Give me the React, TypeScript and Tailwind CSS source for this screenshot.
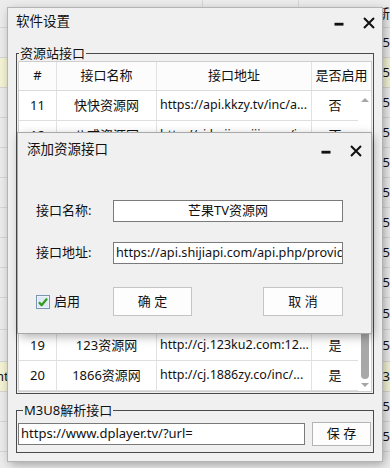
import React from 'react';

const FONT = { fontFamily: '"Noto Sans", "Noto Sans CJK SC", sans-serif' };

interface Row {
  id: number;
  name: string;
  url: string;
  on: string;
}

const rows: Row[] = [
  { id: 11, name: '快快资源网', url: 'https://api.kkzy.tv/inc/a...', on: '否' },
  { id: 12, name: '八戒资源网', url: 'http://cj.bajiecaiji.com/i...', on: '否' },
  { id: 13, name: '酷云资源网', url: 'http://caiji.kuyun98.co...', on: '是' },
  { id: 14, name: '最大资源网', url: 'http://www.zdziyuan.co...', on: '是' },
  { id: 15, name: '永久资源网', url: 'http://cj.yongjiuzyw.co...', on: '是' },
  { id: 16, name: '135资源网', url: 'http://cj.zycjw1.com/inc...', on: '是' },
  { id: 17, name: '麻花资源网', url: 'https://www.mhapi123.c...', on: '是' },
  { id: 18, name: '88资源网', url: 'http://www.88zyw.net/in...', on: '是' },
  { id: 19, name: '123资源网', url: 'http://cj.123ku2.com:12...', on: '是' },
  { id: 20, name: '1866资源网', url: 'http://cj.1886zy.co/inc/...', on: '是' },
];

// rows of the app behind the settings window
const bgRows = [
  { left: '', right: '更新', yellow: false, h: 'h-[28px]' },
  { left: '', right: '05', yellow: false, h: 'h-[30px]' },
  { left: '', right: '05', yellow: true, h: 'h-[30px]' },
  { left: '', right: '05', yellow: false, h: 'h-[30px]' },
  { left: '', right: '05', yellow: false, h: 'h-[30px]' },
  { left: '', right: '05', yellow: false, h: 'h-[30px]' },
  { left: '', right: '05', yellow: false, h: 'h-[30px]' },
  { left: '', right: '05', yellow: false, h: 'h-[30px]' },
  { left: '', right: '05', yellow: false, h: 'h-[30px]' },
  { left: '', right: '05', yellow: false, h: 'h-[30px]' },
  { left: '', right: '05', yellow: false, h: 'h-[32px]' },
  { left: '', right: '05', yellow: false, h: 'h-[32px]' },
  { left: 'nt', right: 'B3', yellow: true, h: 'h-[30px]' },
  { left: '', right: '05', yellow: false, h: 'h-[30px]' },
  { left: '', right: '05', yellow: false, h: 'h-[30px]' },
];

const MinIcon = () => (
  <svg width="12" height="12" viewBox="0 0 12 12">
    <rect x="1.5" y="5.8" width="9" height="2.8" fill="#111" />
  </svg>
);

const CloseIcon = () => (
  <svg width="14" height="14" viewBox="0 0 14 14">
    <path d="M2 2 L12 12 M12 2 L2 12" stroke="#111" strokeWidth="2" />
  </svg>
);

const Check = () => (
  <svg width="14" height="14" viewBox="0 0 14 14">
    <rect x="0.5" y="0.5" width="13" height="13" fill="#eef4fb" stroke="#7a94b4" />
    <rect x="2" y="2" width="10" height="10" fill="#dfe9f5" />
    <path d="M3 7.2 L5.6 10.2 L11 3.6" stroke="#2f9a1e" strokeWidth="2.2" fill="none" strokeLinejoin="round" />
  </svg>
);

const App: React.FC = () => {
  return (
    <div className="relative w-[390px] h-[468px] overflow-hidden bg-[#ececec] text-[#111]" style={FONT}>
      {/* background app grid */}
      <div className="flex flex-col">
        {bgRows.map((r, i) => (
          <div
            key={i}
            className={`${r.h} flex items-center border-b border-[#d6d6d6] text-[13px] ${r.yellow ? 'bg-[#f4f3d4]' : ''}`}
          >
            <div className="w-[215px] h-full flex items-center border-r border-[#d6d6d6] -ml-[4px]">{r.left}</div>
            <div className="w-[100px] h-full border-r border-[#d6d6d6]" />
            <div className="w-[68px] h-full" />
            <div className="whitespace-nowrap">{r.right}</div>
          </div>
        ))}
      </div>

      {/* main window */}
      <div className="absolute left-[8px] top-[8px] w-[374px] flex flex-col bg-[#f0f0f0] shadow-[0_0_0_1px_#b4b4b4,2px_3px_10px_rgba(0,0,0,0.35)]">
        <div className="h-[28px] flex items-center pl-[8px] pr-[6px]">
          <span className="text-[13.5px] leading-none">软件设置</span>
          <div className="ml-auto flex items-center gap-[17px] mt-[2px]">
            <MinIcon />
            <CloseIcon />
          </div>
        </div>

        <fieldset className="mx-[8px] mt-[9px] border border-[#4a4a4a] px-[1px] pb-[1px]">
          <legend className="ml-[1px] px-[1px] text-[13px] leading-[16px]">资源站接口</legend>
          <div className="border border-[#cfcfcf] bg-white h-[331px] overflow-hidden flex flex-col text-[13px]">
            <div className="h-[29px] shrink-0 grid grid-cols-[38px_100px_155px_59px] border-b border-[#dadada] bg-[#fcfcfc]">
              <div className="flex items-center justify-center border-r border-[#e2e2e2]">#</div>
              <div className="flex items-center justify-center border-r border-[#e2e2e2]">接口名称</div>
              <div className="flex items-center justify-center border-r border-[#e2e2e2]">接口地址</div>
              <div className="flex items-center justify-center whitespace-nowrap">是否启用</div>
            </div>
            <div className="flex flex-1 min-h-0">
              <div className="flex flex-col w-[339px]">
                {rows.map((r) => (
                  <div key={r.id} className="h-[30px] shrink-0 grid grid-cols-[38px_100px_155px_46px] border-b border-[#dedede]">
                    <div className="flex items-center justify-center border-r border-[#e2e2e2]">{r.id}</div>
                    <div className="flex items-center justify-center border-r border-[#e2e2e2] whitespace-nowrap">{r.name}</div>
                    <div className="flex items-center pl-[3px] border-r border-[#e2e2e2] whitespace-nowrap overflow-hidden text-[12.5px]">{r.url}</div>
                    <div className="flex items-center justify-center">{r.on}</div>
                  </div>
                ))}
              </div>
              <div className="w-[13px] flex flex-col items-center bg-white">
                <svg width="10" height="14" viewBox="0 0 10 14" className="mt-[2px]">
                  <path d="M1 9 L5 5 L9 9 Z" fill="#a6a6a6" />
                </svg>
                <div className="w-[8px] h-[178px] mt-[94px] rounded-[4px] bg-[#a8a8a8]" />
                <svg width="10" height="10" viewBox="0 0 10 10" className="mt-[1px]">
                  <path d="M1 3 L5 7 L9 3 Z" fill="#a6a6a6" />
                </svg>
              </div>
            </div>
          </div>
        </fieldset>

        <fieldset className="mx-[8px] mt-[8px] mb-[8px] border border-[#4a4a4a] px-[1px] pt-[4px] pb-[6px]">
          <legend className="ml-[5px] px-[1px] text-[13px] leading-[16px]">M3U8解析接口</legend>
          <div className="flex items-center gap-[7px]">
            <div className="w-[287px] h-[22px] border border-[#7a7a7a] bg-white flex items-center pl-[2px] text-[13px] whitespace-nowrap">
              https://www.dplayer.tv/?url=
            </div>
            <button className="w-[59px] h-[24px] border border-[#b4b4b4] bg-[#fdfdfd] text-[13px] flex items-center justify-center">
              保 存
            </button>
          </div>
        </fieldset>

        {/* add source dialog */}
        <div className="absolute left-[10px] top-[125px] w-[353px] h-[200px] flex flex-col bg-[#f0f0f0] shadow-[0_0_0_1px_#a8a8a8,2px_3px_10px_rgba(0,0,0,0.35)]">
          <div className="h-[34px] flex items-center pl-[9px] pr-[8px]">
            <span className="text-[13.5px] leading-none">添加资源接口</span>
            <div className="ml-auto flex items-center gap-[17px] mt-[2px]">
              <MinIcon />
              <CloseIcon />
            </div>
          </div>
          <div className="flex flex-col pl-[18px] text-[13px]">
            <div className="mt-[33px] h-[22px] flex items-center">
              <span className="w-[77px]">接口名称:</span>
              <div className="w-[230px] h-[22px] border border-[#7a7a7a] bg-white flex items-center justify-center whitespace-nowrap">
                芒果TV资源网
              </div>
            </div>
            <div className="mt-[20px] h-[22px] flex items-center">
              <span className="w-[77px]">接口地址:</span>
              <div className="w-[230px] h-[22px] border border-[#7a7a7a] bg-white flex items-center pl-[2px] whitespace-nowrap overflow-hidden text-[12.7px]">
                https://api.shijiapi.com/api.php/provide/vod/
              </div>
            </div>
            <div className="mt-[23px] h-[29px] flex items-center">
              <div className="w-[77px] flex items-center gap-[4px]">
                <Check />
                <span>启用</span>
              </div>
              <button className="w-[79px] h-[29px] border border-[#c4c4c4] bg-[#fdfdfd] flex items-center justify-center">
                确 定
              </button>
              <button className="ml-[71px] w-[80px] h-[29px] border border-[#c4c4c4] bg-[#fdfdfd] flex items-center justify-center">
                取 消
              </button>
            </div>
          </div>
        </div>
      </div>
    </div>
  );
};

export default App;
